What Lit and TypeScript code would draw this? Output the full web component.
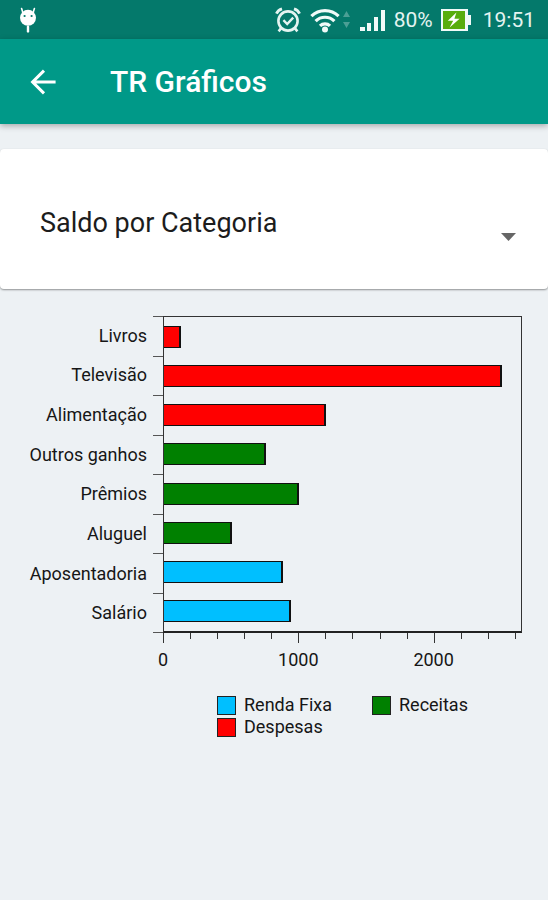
import { LitElement, html, css } from "lit";
import { customElement, property, state } from "lit/decorators.js";
import { styleMap } from "lit/directives/style-map.js";

type Group = "fixed" | "income" | "expense";

interface Entry {
  label: string;
  value: number;
  group: Group;
}

const AXIS_MAX = 2652;
const MINOR_STEP = 200;
const MAJOR_STEP = 1000;

const ENTRIES: Entry[] = [
  { label: "Livros", value: 125, group: "expense" },
  { label: "Televisão", value: 2510, group: "expense" },
  { label: "Alimentação", value: 1205, group: "expense" },
  { label: "Outros ganhos", value: 760, group: "income" },
  { label: "Prêmios", value: 1005, group: "income" },
  { label: "Aluguel", value: 505, group: "income" },
  { label: "Aposentadoria", value: 887, group: "fixed" },
  { label: "Salário", value: 945, group: "fixed" },
];

const LEGEND: { label: string; group: Group }[] = [
  { label: "Renda Fixa", group: "fixed" },
  { label: "Receitas", group: "income" },
  { label: "Despesas", group: "expense" },
];

@customElement("status-bar")
export class StatusBar extends LitElement {
  static styles = css`
    :host {
      display: flex;
      align-items: center;
      height: 39px;
      padding: 0 13px 0 18px;
      background: #04796b;
      color: #e4f4f1;
      font-size: 21px;
      line-height: 24px;
    }
    svg {
      display: block;
      flex: none;
    }
    .notice {
      margin-right: auto;
    }
    .wifi {
      margin-left: 9px;
    }
    .traffic {
      margin-left: 3px;
    }
    .signal {
      margin-left: 10px;
    }
    .charge {
      margin-left: 8px;
    }
    .battery {
      margin-left: 8px;
    }
    .clock {
      margin-left: 12px;
    }
  `;

  render() {
    return html`
      <svg class="notice" width="20" height="26" viewBox="0 0 20 26" aria-hidden="true">
        <path d="M3.6 1.6 5 6M16.4 1.6 15 6" stroke="#fff" stroke-width="1.6" stroke-linecap="round" />
        <circle cx="10" cy="10.8" r="8" fill="#fff" />
        <path d="M10 19.8v4.6" stroke="#fff" stroke-width="2.4" stroke-linecap="round" />
        <circle cx="6.6" cy="9" r="1.1" fill="#04796b" />
        <circle cx="13.6" cy="9" r="1.1" fill="#04796b" />
      </svg>
      <svg width="26" height="26" viewBox="0 0 26 26" fill="none" stroke="#e4f4f1" aria-hidden="true">
        <circle cx="13" cy="14" r="9.6" stroke-width="2.6" />
        <path d="M1.4 6.6Q3 3 7 1.8M24.6 6.6Q23 3 19 1.8" stroke-width="2.8" />
        <path d="m8.4 13.2 3.8 3.8 6-6.4" stroke-width="2.4" />
        <path d="m6 21.4-2.4 3M20 21.4l2.4 3" stroke-width="2.6" />
      </svg>
      <svg class="wifi" width="30" height="26" viewBox="0 0 30 26" fill="none" stroke="#f1faf8" stroke-width="3.2" aria-hidden="true">
        <path d="M1.4 9.2a19.4 19.4 0 0 1 27.2 0" />
        <path d="M5.6 14.2a13.2 13.2 0 0 1 18.8 0" />
        <path d="M10 18.8a7.2 7.2 0 0 1 10 0" />
        <circle cx="15" cy="22.4" r="3" fill="#f1faf8" stroke="none" />
      </svg>
      <svg class="traffic" width="7" height="18" viewBox="0 0 7 18" fill="#4b9f95" aria-hidden="true">
        <path d="M0 6 3.5 0 7 6zM0 11h7l-3.5 6z" />
      </svg>
      <svg class="signal" width="26" height="24" viewBox="0 0 26 24" fill="#f1faf8" aria-hidden="true">
        <path d="M0 19h5v4H0zM7 15h4v8H7zM14 9h4v14h-4zM21 2h4v21h-4z" />
      </svg>
      <span class="charge">80%</span>
      <svg class="battery" width="30" height="22" viewBox="0 0 30 22" aria-hidden="true">
        <path d="M0 0h27v6h3v10h-3v6H0z" fill="#f1faf8" />
        <path d="M2 2h22v18H2z" fill="#58ad0d" />
        <path d="m15.4 3.6-8.6 8.2h5.4l-3.6 6.6 10-8.6h-5.2z" fill="#fff" />
      </svg>
      <span class="clock">19:51</span>
    `;
  }
}

@customElement("app-bar")
export class AppBar extends LitElement {
  @property() heading = "";

  static styles = css`
    :host {
      display: flex;
      align-items: center;
      gap: 44px;
      height: 85px;
      padding: 0 20px;
      background: #009988;
      color: #fff;
      box-shadow: 0 2px 6px rgba(0, 0, 0, 0.3);
    }
    button {
      display: flex;
      margin: 0;
      padding: 10px;
      border: 0;
      background: none;
      color: inherit;
    }
    h1 {
      margin: 0;
      font-size: 30px;
      line-height: 36px;
      font-weight: 500;
    }
  `;

  render() {
    return html`
      <button type="button" aria-label="Voltar">
        <svg width="26" height="26" viewBox="0 0 26 26" fill="none" stroke="currentColor" stroke-width="3">
          <path d="M25.6 13H3M14 1.6 2.6 13 14 24.4" />
        </svg>
      </button>
      <h1>${this.heading}</h1>
    `;
  }
}

@customElement("balance-chart")
export class BalanceChart extends LitElement {
  @property({ attribute: false }) entries: Entry[] = [];

  static styles = css`
    :host {
      display: block;
      padding: 27px 26px 0 0;
      color: #161616;
      font-size: 18px;
      line-height: 22px;
    }
    .fixed {
      background: #00bfff;
    }
    .income {
      background: #008000;
    }
    .expense {
      background: #ff0000;
    }
    .plot {
      display: grid;
      grid-template-columns: 153px 10px 1fr;
    }
    .labels,
    .ticks,
    .bars {
      display: grid;
      grid-auto-rows: 1fr;
      height: 317px;
      box-sizing: border-box;
    }
    .label {
      align-self: center;
      padding-right: 6px;
      text-align: right;
    }
    .ticks {
      border-bottom: 1px solid #555;
    }
    .tick {
      border-top: 1px solid #555;
    }
    .bars {
      border: 1px solid #333;
      border-bottom: 2px solid #222;
      align-items: center;
    }
    .bar {
      box-sizing: border-box;
      height: 22px;
      border: 1px solid #111;
      border-right-width: 2px;
      border-left: 0;
    }
    .axis {
      grid-column: 3;
      display: flex;
      height: 38px;
    }
    .step {
      flex: none;
      box-sizing: border-box;
    }
    .mark {
      width: 1px;
      height: 6px;
      background: #333;
    }
    .major .mark {
      height: 10px;
    }
    .number {
      display: flex;
      justify-content: center;
      width: 0;
      margin-top: 6px;
    }
    .legend {
      display: grid;
      grid-template-columns: 155px auto;
      justify-content: start;
      margin: 23px 0 0;
      padding: 0 0 0 217px;
      list-style: none;
    }
    .item {
      display: flex;
      align-items: center;
      gap: 8px;
    }
    .swatch {
      box-sizing: border-box;
      width: 19px;
      height: 19px;
      border: 1px solid #222;
    }
  `;

  private renderAxis() {
    const steps: number[] = [];
    for (let v = 0; v <= AXIS_MAX; v += MINOR_STEP) steps.push(v);
    return steps.map((v) => {
      const major = v % MAJOR_STEP === 0;
      const span = Math.min(MINOR_STEP, AXIS_MAX - v);
      return html`<div
        class="step ${major ? "major" : ""}"
        style=${styleMap({ width: `${(span / AXIS_MAX) * 100}%` })}
      >
        <div class="mark"></div>
        ${major ? html`<div class="number">${v}</div>` : null}
      </div>`;
    });
  }

  render() {
    return html`
      <div class="plot">
        <div class="labels">
          ${this.entries.map((e) => html`<div class="label">${e.label}</div>`)}
        </div>
        <div class="ticks">${this.entries.map(() => html`<div class="tick"></div>`)}</div>
        <div class="bars">
          ${this.entries.map(
            (e) => html`<div
              class="bar ${e.group}"
              style=${styleMap({ width: `${(e.value / AXIS_MAX) * 100}%` })}
            ></div>`
          )}
        </div>
        <div class="axis">${this.renderAxis()}</div>
      </div>
      <ul class="legend">
        ${LEGEND.map(
          (l) => html`<li class="item"><span class="swatch ${l.group}"></span>${l.label}</li>`
        )}
      </ul>
    `;
  }
}

@customElement("app-root")
export class AppRoot extends LitElement {
  @state() private entries = ENTRIES;

  static styles = css`
    :host {
      display: block;
      min-height: 100vh;
      background: #edf1f4;
      font-family: Roboto, "Liberation Sans", sans-serif;
    }
    .picker {
      display: grid;
      grid-template-columns: 1fr 15px;
      align-items: center;
      margin-top: 25px;
      padding: 50px 32px 42px 40px;
      border-radius: 4px;
      background: #fff;
      box-shadow: 0 1px 2px rgba(0, 0, 0, 0.4);
    }
    select {
      grid-area: 1 / 1 / 2 / 3;
      appearance: none;
      height: 48px;
      margin: 0;
      padding: 0;
      border: 0;
      background: none;
      color: #1c1c1c;
      font-family: inherit;
      font-size: 27px;
      line-height: 36px;
    }
    .arrow {
      grid-area: 1 / 2 / 2 / 3;
      align-self: end;
      margin-bottom: 6px;
      pointer-events: none;
    }
  `;

  render() {
    return html`
      <status-bar></status-bar>
      <app-bar heading="TR Gráficos"></app-bar>
      <main>
        <div class="picker">
          <select aria-label="Tipo de gráfico">
            <option>Saldo por Categoria</option>
          </select>
          <svg class="arrow" width="15" height="8" viewBox="0 0 15 8" fill="#666" aria-hidden="true">
            <path d="M0 0h15L7.5 8z" />
          </svg>
        </div>
        <balance-chart .entries=${this.entries}></balance-chart>
      </main>
    `;
  }
}
